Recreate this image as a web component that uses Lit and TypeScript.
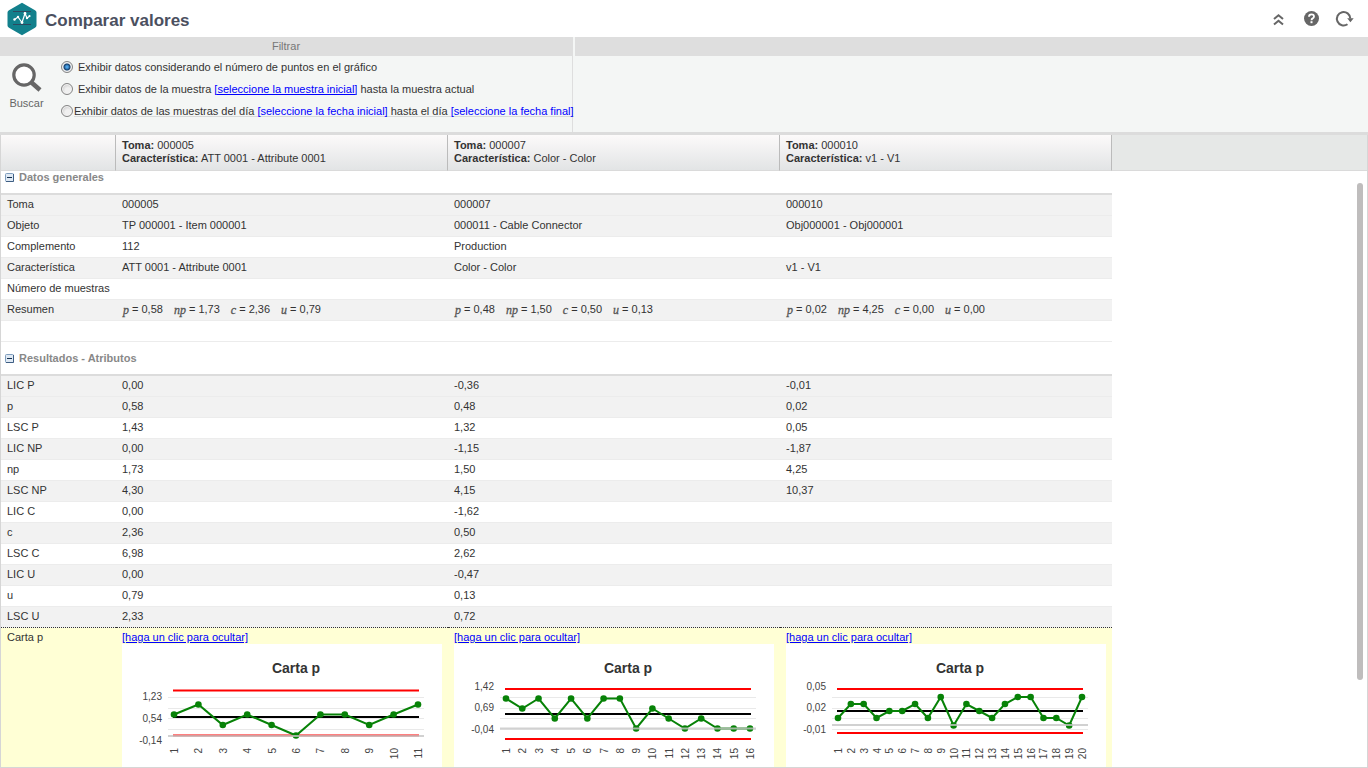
import { LitElement, html, svg, css } from "lit";
import { customElement, property } from "lit/decorators.js";
import { classMap } from "lit/directives/class-map.js";

interface ChartData {
  labels: { text: string; y: number }[];
  upper: number;
  center: number;
  lower: number;
  axis: number;
  points: number[];
}

const CHARTS: ChartData[] = [
  {
    labels: [{ text: "1,23", y: 56 }, { text: "0,54", y: 78 }, { text: "-0,14", y: 100 }],
    upper: 46.5, center: 73, lower: 91.5, axis: 92,
    points: [70.5, 60.5, 81, 70.5, 81, 91.5, 70.5, 70.5, 81, 70.5, 60.5],
  },
  {
    labels: [{ text: "1,42", y: 46 }, { text: "0,69", y: 67 }, { text: "-0,04", y: 89 }],
    upper: 45, center: 70, lower: 95, axis: 84.5,
    points: [54.5, 64.5, 54.5, 74.5, 54.5, 74.5, 54.5, 54.5, 84.5, 64.5, 74.5, 84.5, 74.5, 84.5, 84.5, 84.5],
  },
  {
    labels: [{ text: "0,05", y: 46 }, { text: "0,02", y: 67 }, { text: "-0,01", y: 89 }],
    upper: 45, center: 67, lower: 89, axis: 81,
    points: [74, 60, 60, 74, 67, 67, 60, 74, 53, 81.5, 60, 67, 74, 60, 53, 53, 74, 74, 81.5, 53],
  },
];

const HEADERS = [
  { toma: "000005", car: "ATT 0001 - Attribute 0001" },
  { toma: "000007", car: "Color - Color" },
  { toma: "000010", car: "v1 - V1" },
];

const GENERAL: string[][] = [
  ["Toma", "000005", "000007", "000010"],
  ["Objeto", "TP 000001 - Item 000001", "000011 - Cable Connector", "Obj000001 - Obj000001"],
  ["Complemento", "112", "Production", ""],
  ["Característica", "ATT 0001 - Attribute 0001", "Color - Color", "v1 - V1"],
  ["Número de muestras", "", "", ""],
];

const SUMMARY: string[][] = [
  ["0,58", "1,73", "2,36", "0,79"],
  ["0,48", "1,50", "0,50", "0,13"],
  ["0,02", "4,25", "0,00", "0,00"],
];
const SYMBOLS = ["p", "np", "c", "u"];

const RESULTS: string[][] = [
  ["LIC P", "0,00", "-0,36", "-0,01"],
  ["p", "0,58", "0,48", "0,02"],
  ["LSC P", "1,43", "1,32", "0,05"],
  ["LIC NP", "0,00", "-1,15", "-1,87"],
  ["np", "1,73", "1,50", "4,25"],
  ["LSC NP", "4,30", "4,15", "10,37"],
  ["LIC C", "0,00", "-1,62", ""],
  ["c", "2,36", "0,50", ""],
  ["LSC C", "6,98", "2,62", ""],
  ["LIC U", "0,00", "-0,47", ""],
  ["u", "0,79", "0,13", ""],
  ["LSC U", "2,33", "0,72", ""],
];

@customElement("control-chart")
export class ControlChart extends LitElement {
  @property({ attribute: false }) data!: ChartData;

  static styles = css`
    :host { display: block; width: 320px; background: #fff; }
    svg { display: block; font-family: "Liberation Sans", Arial, sans-serif; }
    .title { font-size: 14px; font-weight: bold; fill: #333; text-anchor: middle; }
    .label { font-size: 10px; fill: #444; text-anchor: end; }
    .grid { stroke: #e9e9e9; stroke-width: 1; }
    .limit { stroke: #f00; stroke-width: 2; }
    .center { stroke: #000; stroke-width: 2; }
    .axis { stroke: #c6c6c6; stroke-opacity: 0.8; stroke-width: 2; }
    .series { fill: none; stroke: #078207; stroke-width: 2; }
    .dot { fill: #078207; }
  `;

  render() {
    const d = this.data;
    const step = 244 / (d.points.length - 1);
    const px = (i: number) => 52 + i * step;
    return html`
      <svg width="320" height="200" viewBox="0 0 320 200" role="img" aria-label="Carta p">
        <text class="title" x="174" y="29">Carta p</text>
        ${[53.5, 64.5, 74.5, 85.5].map((y) => svg`<line class="grid" x1="46" x2="302" y1=${y} y2=${y} />`)}
        ${d.labels.map((l) => svg`<text class="label" x="40" y=${l.y}>${l.text}</text>`)}
        <line class="limit" x1="51" x2="297" y1=${d.upper} y2=${d.upper} />
        <line class="limit" x1="51" x2="297" y1=${d.lower} y2=${d.lower} />
        <line class="center" x1="51" x2="297" y1=${d.center} y2=${d.center} />
        <polyline class="series" points=${d.points.map((y, i) => `${px(i)},${y}`).join(" ")} />
        ${d.points.map((y, i) => svg`<circle class="dot" cx=${px(i)} cy=${y} r="3.3" />`)}
        <line class="axis" x1="46" x2="302" y1=${d.axis} y2=${d.axis} />
        ${d.points.map((_, i) => svg`<text class="label" transform="translate(${px(i) + 4} 104) rotate(-90)">${i + 1}</text>`)}
      </svg>
    `;
  }
}

@customElement("app-root")
export class AppRoot extends LitElement {
  static styles = css`
    :host {
      display: flex; flex-direction: column; height: 100vh; overflow: hidden;
      background: #fff; color: #333;
      font: 11px/13px "Liberation Sans", Arial, sans-serif;
    }
    * { box-sizing: border-box; }
    a { color: #00f; }
    button { border: 0; padding: 0; background: none; font: inherit; color: inherit; display: block; }
    svg { display: block; }

    .top { display: flex; align-items: center; flex: none; height: 37px; padding: 0 13px 0 7px; }
    .top h1 { flex: 1; margin: 4px 0 0 8px; font-size: 17px; line-height: 20px; color: #4b505f; }
    .tools { display: flex; align-items: center; gap: 14px; }

    .filters { display: flex; flex: none; height: 98px; border-bottom: 3px solid #dcdcdc; background: #f4f6f5; }
    .filter { display: flex; flex-direction: column; width: 573px; border-right: 1px solid #dedede; }
    .rest { flex: 1; border-top: 19px solid #dedede; margin-left: 2px; }
    .bar { height: 19px; line-height: 19px; text-align: center; background: #dedede; color: #777; }
    .body { display: flex; flex: 1; }
    .search { flex: none; width: 53px; padding-top: 5px; color: #666; display: flex; flex-direction: column; align-items: center; gap: 3px; }
    .options { padding-left: 8px; flex: 1; min-width: 0; white-space: nowrap; }
    .option { display: flex; align-items: center; height: 22px; gap: 5px; }
    .option.tight { gap: 1px; }
    .option.tight .caption { line-height: 9px; box-shadow: 0 1px #d8dada; }
    .option.tight a { text-decoration: none; }
    .option input {
      flex: none; appearance: none; width: 12px; height: 12px; margin: 0; border: 1px solid #858585; border-radius: 50%;
      background: radial-gradient(circle at 60% 65%, #f0f0f0 30%, #bdbdbd 100%); box-shadow: inset 0 0 0 1px #f4f4f4;
    }
    .option input:checked { background: radial-gradient(circle, #4aa3e8 0 1px, #15406e 3px, #d8dce0 4px); }

    .grid { position: relative; flex: 1; min-height: 0; overflow: hidden; border: 1px solid #d6d6d6; border-top: 0; }
    table { width: 100%; border-collapse: separate; border-spacing: 0; table-layout: fixed; }
    .c0 { width: 115px; }
    .cn { width: 332px; }
    th { font-weight: normal; text-align: left; padding: 0 6px; }
    thead th {
      height: 36px; border-right: 1px solid #bbb; border-bottom: 1px solid #dadada;
      background: linear-gradient(#fcfafa, #e2e4e5); padding-bottom: 1px;
    }
    thead .fill { background: #e6e8e7; border-right: 0; }
    td { padding: 0 6px; }
    .row th, .row td { height: 21px; padding-top: 0; padding-bottom: 2px; border-bottom: 1px solid #ececec; }
    .row.alt > :not(.fill) { background: #f2f2f2; }
    .row > .fill { border-bottom: 0; }
    .row.last > :not(.fill) { border-bottom: 1px dotted #333; }
    .section > :not(.fill) { height: 34px; border-bottom: 2px solid #dcdcdc; padding: 0 4px; }
    .section.short > :not(.fill) { height: 24px; padding-bottom: 9px; }
    .heading { display: flex; align-items: center; gap: 5px; font-weight: bold; color: #888; }
    .summary { display: flex; gap: 11px; padding-left: 1px; }
    .summary span { display: flex; gap: 3px; }
    .summary i { font: italic 12px/12px "Liberation Serif", serif; -webkit-text-stroke: 0.3px #555; color: #555; padding-top: 1px; }
    .charts > * { vertical-align: top; padding-top: 3px; }
    .charts > :not(.fill) { background: #ffffd5; }
    .thumb { position: absolute; right: 4px; top: 48px; width: 6px; height: 497px; border-radius: 3px; background: #bfbdbd; }
  `;

  private row(cells: string[], i: number, last = false) {
    const alt = i === 0 || i % 2 === 1;
    return html`<tr class=${classMap({ row: true, alt, last })}>
      <th scope="row">${cells[0]}</th>
      ${cells.slice(1).map((c) => html`<td>${c}</td>`)}
      <td class="fill"></td>
    </tr>`;
  }

  private section(title: string, short: boolean) {
    return html`<tr class=${classMap({ section: true, short })}>
      <th colspan="4">
        <button class="heading" aria-expanded="true">
          <svg width="9" height="9" viewBox="0 0 9 9">
            <rect x=".5" y=".5" width="8" height="8" rx="1" fill="#dfe9f4" stroke="#7f9dbd" />
            <path d="M1 8.500H8.500V1" fill="none" stroke="#3f5f84" />
            <path d="M2 4.500H7" stroke="#14304e" />
          </svg>
          ${title}
        </button>
      </th>
      <td class="fill"></td>
    </tr>`;
  }

  render() {
    return html`
      <header class="top">
        <svg width="30" height="34" viewBox="0 0 30 34">
          <path d="M15 .8 28 8.2Q29.5 9.2 29.5 10.5V23.5Q29.5 25 28 25.8L15 33.2 2 25.8Q.5 25 .5 23.5V10.5Q.5 9.2 2 8.2Z" fill="#12808c" />
          <path d="M6 9.500H24M6 22.500H24" stroke="#2d4960" />
          <path d="M7.500 17.500 11 15 15 20.500 18 11.500 20 16 23 14" fill="none" stroke="#fff" stroke-width="1.200" />
          <g fill="#fff"><circle cx="7.500" cy="17.500" r="1.200" /><circle cx="11" cy="15" r="1.200" /><circle cx="15" cy="20.500" r="1.400" /><circle cx="18" cy="11.500" r="1.400" /><circle cx="20" cy="16" r="1.200" /><circle cx="22.500" cy="14" r="1.100" /></g>
        </svg>
        <h1>Comparar valores</h1>
        <div class="tools">
          <button aria-label="Contraer">
            <svg width="17" height="16" viewBox="0 0 17 16"><path d="M2 8 6.500 4.200 11 8M2 13.500 6.500 9.700 11 13.500" fill="none" stroke="#666" stroke-width="2" /></svg>
          </button>
          <button aria-label="Ayuda">
            <svg width="18" height="18" viewBox="0 0 18 18"><circle cx="8.500" cy="8.500" r="7.500" fill="#666" /><path d="M6 6.700Q6 4.300 8.500 4.300T11 6.500Q11 7.700 9.700 8.400 8.500 9 8.500 10.200" fill="none" stroke="#fff" stroke-width="1.800" /><rect x="7.500" y="11.200" width="2" height="2" fill="#fff" /></svg>
          </button>
          <button aria-label="Actualizar">
            <svg width="20" height="18" viewBox="0 0 20 18"><path d="M12.500 14.200A6.700 6.700 0 1 1 15.300 8.500" fill="none" stroke="#666" stroke-width="2" /><path d="M12.200 8.300H18.700L15.400 12.200Z" fill="#666" /></svg>
          </button>
        </div>
      </header>

      <div class="filters">
        <div class="filter">
          <div class="bar">Filtrar</div>
          <div class="body">
            <button class="search">
              <svg width="32" height="33" viewBox="0 0 32 33"><circle cx="13" cy="14" r="10.200" fill="#fff" stroke="#666" stroke-width="3.200" /><path d="M20.500 21.500 29 29" stroke="#666" stroke-width="4.500" /></svg>
              Buscar
            </button>
            <div class="options">
              <div class="option">
                <input type="radio" name="mode" id="m1" checked />
                <label for="m1">Exhibir datos considerando el número de puntos en el gráfico</label>
              </div>
              <div class="option">
                <input type="radio" name="mode" id="m2" />
                <span class="caption"><label for="m2">Exhibir datos de la muestra</label> <a href="#">[seleccione la muestra inicial]</a> hasta la muestra actual</span>
              </div>
              <div class="option tight">
                <input type="radio" name="mode" id="m3" />
                <span class="caption"><label for="m3">Exhibir datos de las muestras del día</label> <a href="#">[seleccione la fecha inicial]</a> hasta el día <a href="#">[seleccione la fecha final]</a></span>
              </div>
            </div>
          </div>
        </div>
        <div class="rest"></div>
      </div>

      <main class="grid">
        <table>
          <colgroup><col class="c0" /><col class="cn" /><col class="cn" /><col class="cn" /><col /></colgroup>
          <thead>
            <tr>
              <th></th>
              ${HEADERS.map((h) => html`<th scope="col"><b>Toma:</b> ${h.toma}<br /><b>Característica:</b> ${h.car}</th>`)}
              <th class="fill"></th>
            </tr>
          </thead>
          <tbody>
            ${this.section("Datos generales", true)}
            ${GENERAL.map((r, i) => this.row(r, i))}
            <tr class="row alt">
              <th scope="row">Resumen</th>
              ${SUMMARY.map((s) => html`<td><div class="summary">${s.map((v, i) => html`<span><i>${SYMBOLS[i]}</i>= ${v}</span>`)}</div></td>`)}
              <td class="fill"></td>
            </tr>
            ${this.row(["", "", "", ""], 2)}
            ${this.section("Resultados - Atributos", false)}
            ${RESULTS.map((r, i) => this.row(r, i, i === RESULTS.length - 1))}
            <tr class="charts">
              <th scope="row">Carta p</th>
              ${CHARTS.map((c) => html`<td><a href="#">[haga un clic para ocultar]</a><control-chart .data=${c}></control-chart></td>`)}
              <td class="fill"></td>
            </tr>
          </tbody>
        </table>
        <div class="thumb"></div>
      </main>
    `;
  }
}
